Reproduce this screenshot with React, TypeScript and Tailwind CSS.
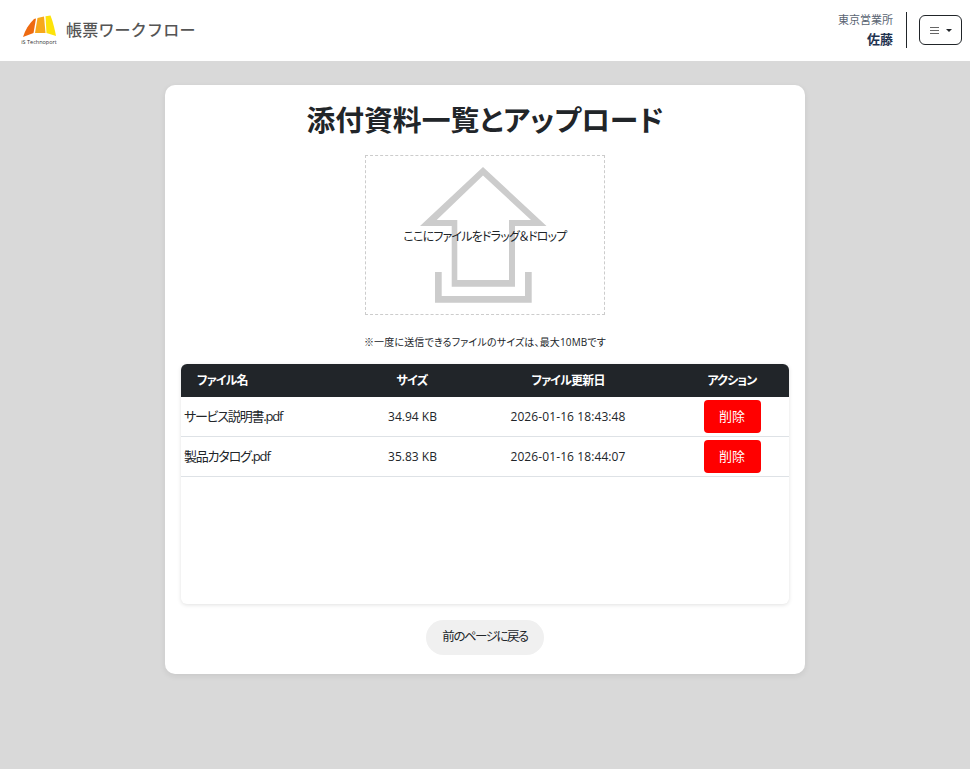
const files = [
  { name: "サービス説明書.pdf", size: "34.94 KB", updated: "2026-01-16 18:43:48" },
  { name: "製品カタログ.pdf", size: "35.83 KB", updated: "2026-01-16 18:44:07" },
];

function Logo() {
  return (
    <div className="flex w-[36px] flex-col items-center">
      <svg width="34" height="23" viewBox="0 0 34 23">
        <path d="M1 22 C3 15 7 9 12 4 L14 3.5 L11.5 18 Z" fill="#ee6a10" />
        <path d="M13 18 L15.5 3 L22 1.5 L23.5 18 Z" fill="#f7a81b" />
        <path d="M24.5 18 L23.5 1.3 L28.5 0.5 C31 7 33 15 34 21 Z" fill="#fde30a" />
      </svg>
      <span className="mt-px text-[5.5px] leading-[6px] whitespace-nowrap text-[#333]">iS Technoport</span>
    </div>
  );
}

function UploadArrow() {
  return (
    <svg className="absolute inset-0" width="238" height="158" viewBox="0 0 238 158" fill="#cccccc">
      <path
        fillRule="evenodd"
        d="M117 11 L180.5 70 H149 V130.7 H85.7 V70 H54 Z M117 19.5 L70.7 64 H91.3 V124 H143 V64 H165 Z"
      />
      <path d="M69 116 H75.7 V140 H159 V116 H165.7 V146.7 H69 Z" />
    </svg>
  );
}

export default function App() {
  return (
    <div className="min-h-[769px] bg-[#d9d9d9] font-['Open_Sans','Noto_Sans_CJK_JP',sans-serif] text-[#212529] [font-feature-settings:'palt']">
      <header className="flex h-[61px] items-center justify-between bg-white pb-px pl-[21px] pr-2">
        <div className="flex items-center gap-[9px]">
          <Logo />
          <span className="text-[16px] font-medium tracking-[0.2px] text-[#555] [font-feature-settings:normal]">帳票ワークフロー</span>
        </div>
        <div className="flex items-center">
          <div className="mr-[13px] text-right">
            <div className="text-[11px] leading-[16px] text-[#5a6472]">東京営業所</div>
            <div className="mt-[2px] text-[13px] font-bold leading-[18px] text-[#1f3350]">佐藤</div>
          </div>
          <div className="h-[36px] w-px bg-[#212529]" />
          <button className="ml-[12px] flex h-[30px] w-[43px] items-center justify-center gap-[7px] rounded-[6px] border border-[#212529] bg-white">
            <span className="flex w-[9px] flex-col gap-[2px]">
              <span className="h-px bg-[#666]" />
              <span className="h-px bg-[#666]" />
              <span className="h-px bg-[#666]" />
            </span>
            <span className="h-0 w-0 border-x-[3px] border-t-[3px] border-x-transparent border-t-[#212529]" />
          </button>
        </div>
      </header>

      <main className="flex justify-center pt-[24px]">
        <section className="h-[589px] w-[640px] rounded-[10px] bg-white px-4 shadow-[0_2px_6px_rgba(0,0,0,0.08)]">
          <h1 className="pt-[14px] text-center text-[28.8px] font-bold leading-[42px]">添付資料一覧とアップロード</h1>

          <div className="relative mx-auto mt-[14px] flex h-[160px] w-[240px] items-center justify-center border border-dashed border-[#cccccc]">
            <UploadArrow />
            <span className="relative top-[2px] text-[12px] tracking-[-0.8px]">ここにファイルをドラッグ＆ドロップ</span>
          </div>

          <p className="mt-[18px] text-center text-[10px] leading-[18px] tracking-[0.15px]">※一度に送信できるファイルのサイズは、最大10MBです</p>

          <div className="mt-[13px] h-[240px] rounded-[6px] bg-white shadow-[0_1px_4px_rgba(0,0,0,0.12)]">
            <table className="w-full table-fixed border-separate border-spacing-0 text-[13px]">
              <colgroup>
                <col className="w-[182px]" />
                <col className="w-[98px]" />
                <col className="w-[214px]" />
                <col className="w-[114px]" />
              </colgroup>
              <thead>
                <tr className="h-[33px] bg-[#212529] text-[12px] tracking-[-0.8px] text-white">
                  <th className="rounded-tl-[6px] pl-4 text-left font-bold">ファイル名</th>
                  <th className="font-bold">サイズ</th>
                  <th className="font-bold">ファイル更新日</th>
                  <th className="rounded-tr-[6px] font-bold">アクション</th>
                </tr>
              </thead>
              <tbody>
                {files.map((f) => (
                  <tr key={f.name} className="h-[40px]">
                    <td className="border-b border-[#dee2e6] pl-[3px] pt-px tracking-[-1.2px]">{f.name}</td>
                    <td className="border-b border-[#dee2e6] pl-px pt-px text-center text-[12px]">{f.size}</td>
                    <td className="border-b border-[#dee2e6] pt-px text-center text-[12px] tracking-[0.1px]">{f.updated}</td>
                    <td className="border-b border-[#dee2e6] text-center">
                      <button className="mx-auto block h-[33px] w-[57px] rounded-[4px] bg-[#ff0000] text-white">削除</button>
                    </td>
                  </tr>
                ))}
              </tbody>
            </table>
          </div>

          <div className="mt-[16px] flex justify-center">
            <button className="h-[35px] w-[118px] rounded-[18px] bg-[#f0f0f0] text-[12.5px] tracking-[-1.5px]">前のページに戻る</button>
          </div>
        </section>
      </main>
    </div>
  );
}
